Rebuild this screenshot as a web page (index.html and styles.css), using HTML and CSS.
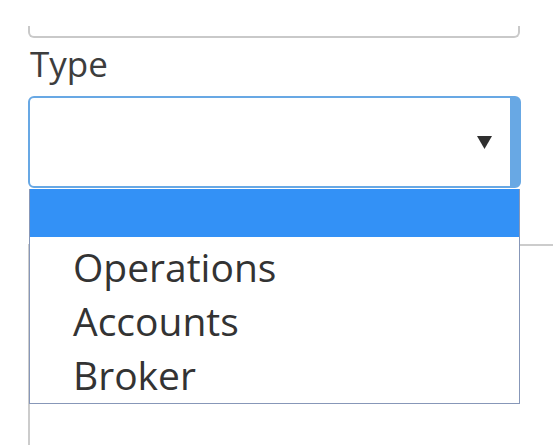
FILE: index.html
```html
<!DOCTYPE html>
<html lang="en">
<head>
<meta charset="utf-8">
<title>Type select</title>
<link rel="stylesheet" href="styles.css">
</head>
<body>
<div class="page">
  <div class="field-top"></div>
  <label class="label">Type</label>
  <div class="select-wrap">
    <div class="select">
      <svg class="arrow" width="15" height="13" viewBox="0 0 15 13"><polygon points="0,0 15,0 7.5,13" fill="#2f2f2f"/></svg>
    </div>
    <ul class="dropdown">
      <li class="opt opt-blank"></li>
      <li class="opt">Operations</li>
      <li class="opt">Accounts</li>
      <li class="opt">Broker</li>
    </ul>
  </div>
  <div class="panel"></div>
</div>
</body>
</html>
```

FILE: styles.css
```css
html, body {
  margin: 0;
  padding: 0;
  background: #ffffff;
}
body {
  width: 553px;
  height: 445px;
  overflow: hidden;
  font-family: "Open Sans", "DejaVu Sans", sans-serif;
}
.page {
  padding-left: 28px;
}
.field-top {
  box-sizing: border-box;
  width: 492px;
  height: 12px;
  margin-top: 26px;
  border: 2px solid #c9c9c9;
  border-top: none;
  border-radius: 0 0 6px 6px;
}
.label {
  display: block;
  margin-top: 2px;
  padding-left: 2px;
  font-size: 35px;
  line-height: 48px;
  height: 48px;
  color: #3d3d3d;
}
.select-wrap {
  position: relative;
  margin-top: 8px;
  width: 493px;
}
.select {
  box-sizing: border-box;
  height: 92px;
  border: 2px solid #68a8e4;
  border-right-width: 11px;
  border-radius: 6px;
  background: #ffffff;
  display: flex;
  align-items: center;
  justify-content: flex-end;
  padding-right: 18px;
}
.arrow {
  display: block;
}
.dropdown {
  position: absolute;
  top: 100%;
  left: 1px;
  width: 491px;
  box-sizing: border-box;
  margin: 1px 0 0;
  padding: 0 0 1px;
  list-style: none;
  background: #ffffff;
  border: 1px solid #8797b8;
  border-top: none;
  z-index: 2;
}
.opt {
  font-size: 39px;
  line-height: 54px;
  height: 54px;
  padding-left: 43px;
  color: #333333;
}
.opt-blank {
  height: 48px;
  background: #3391f6;
  margin-bottom: 3px;
}
.panel {
  margin-top: 56px;
  height: 199px;
  border-top: 2px solid #cccccc;
  border-left: 2px solid #cccccc;
}
```
